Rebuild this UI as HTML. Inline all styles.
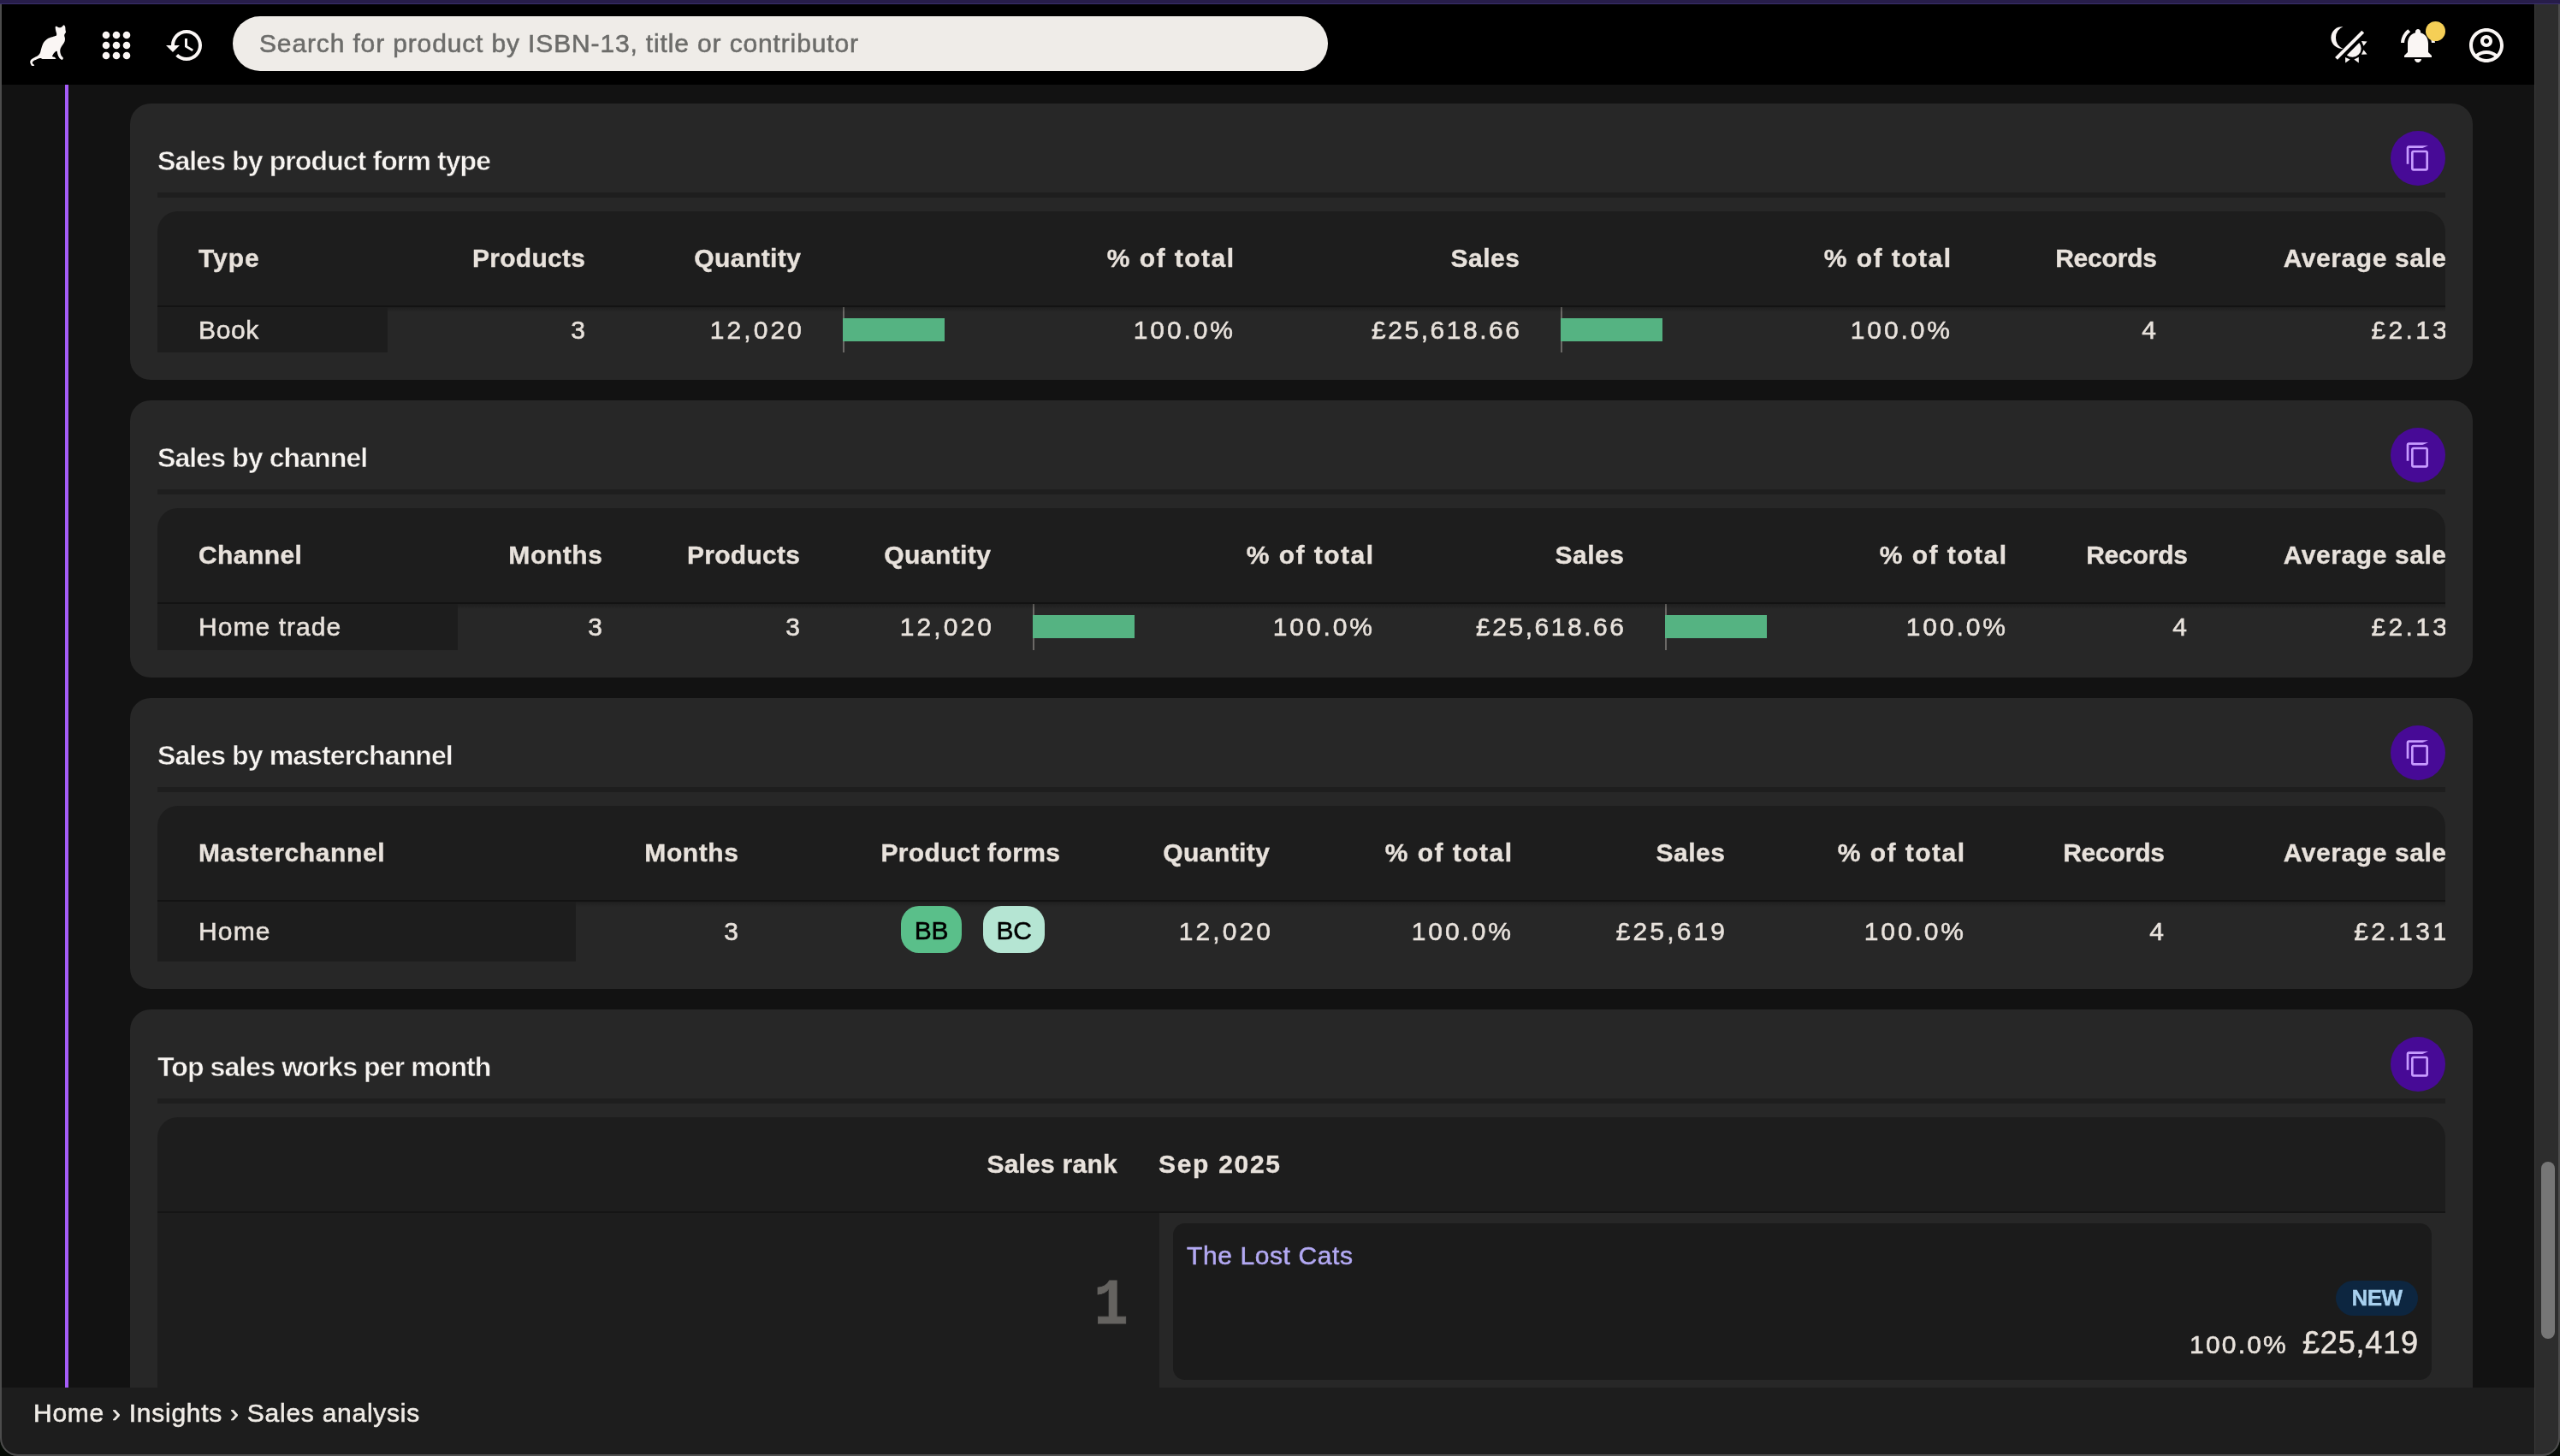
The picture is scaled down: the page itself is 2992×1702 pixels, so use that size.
<!DOCTYPE html>
<html lang="en">
<head>
<meta charset="utf-8">
<title>Sales analysis</title>
<style>
*{box-sizing:border-box;margin:0;padding:0}
html,body{width:2992px;height:1702px;overflow:hidden;background:#121212}
body{position:relative;will-change:transform;font-family:"Liberation Sans",sans-serif;font-size:30px;color:#e8e2dc;-webkit-font-smoothing:antialiased}
.abs{position:absolute}
#strip{left:0;top:0;width:2992px;height:5px;background:#271d4a;border-bottom:1px solid #3a2f6b}
#topbar{left:0;top:5px;width:2962px;height:94px;background:#000}
#sbtrack{left:2962px;top:5px;width:30px;height:1697px;background:#2d2d2d;border-left:1px solid #393939}
#sbthumb{left:2970px;top:1358px;width:16px;height:207px;border-radius:8px;background:#767676}
#frame{left:0;top:5px;width:2992px;height:1697px;border:2px solid #4c4c4c;border-top:0;border-radius:0 0 21px 21px;box-shadow:0 0 0 40px #050a05}
#vline{left:76px;top:99px;width:4px;height:1523px;background:#a55cf7}
#search{left:272px;top:19px;width:1280px;height:64px;border-radius:32px;background:#efece8;color:#6c6c6a;font-size:30px;line-height:64px;padding-left:31px;letter-spacing:.86px;white-space:nowrap}
.ico{position:absolute;fill:#faf6f4}
.card{position:absolute;left:152px;width:2738px;background:#272727;border-radius:24px}
.card h2{position:absolute;left:32px;top:35px;-webkit-text-stroke:.5px #272727;height:64px;line-height:64px;font-size:32px;font-weight:700;letter-spacing:-.9px;color:#f7f4f1;white-space:nowrap}
.card .hr{position:absolute;left:32px;top:104px;width:2674px;height:6px;background:#1e1e1e}
.copy{position:absolute;left:2642px;top:32px;width:64px;height:64px;border-radius:32px;background:#470a96}
.copy svg{position:absolute;left:16px;top:16px;width:32px;height:32px;fill:#c79bff}
table{position:absolute;left:32px;top:126px;width:2674px;border-collapse:separate;border-spacing:0;table-layout:fixed;border-radius:24px 24px 0 0;overflow:hidden}
th{height:112px;background:#1d1d1d;font-weight:700;font-size:30px;text-align:right;padding:0 30px 0 0;vertical-align:middle;border-bottom:2px solid #131313;white-space:nowrap;color:#e8e2dc}
td{height:53px;font-size:30px;text-align:right;padding:0 30px 0 0;vertical-align:middle;white-space:nowrap;letter-spacing:2.2px;color:#e8e2dc}
th{position:relative}
th:after{content:"";position:absolute;left:0;right:0;bottom:-8px;height:6px;background:linear-gradient(rgba(0,0,0,.22),rgba(0,0,0,0));z-index:2}
th:first-child:after{display:none}
th:first-child,td:first-child{text-align:left;padding-left:48px;letter-spacing:.5px}
td:first-child{background:#1d1d1d}
th:last-child,td:last-child{padding-right:0}
td:last-child{padding-right:0}
td.n{letter-spacing:2.2px;padding-right:28px}
td.n:last-child{padding-right:0;position:relative;left:2px}
.pc{position:relative}
.pc i{position:absolute;left:19px;top:0;width:2px;height:53px;background:#6b6966}
.pc b{position:absolute;left:19px;top:13px;width:119px;height:27px;background:#55b382}
.badge{display:inline-block;position:relative;top:-3px;left:-1px;width:71px;height:55px;line-height:57px;border-radius:21px;text-align:center;color:#000;font-size:30px;letter-spacing:-.3px;vertical-align:middle}
#footer{left:0;top:1622px;width:2962px;height:80px;background:#1d1d1d;font-size:30px;line-height:36px;padding:12px 0 0 39px;letter-spacing:.73px;color:#efebe6;white-space:nowrap}

table.tall td{height:70px}
table.t54 td{height:54px}
table.t54 .pc i{height:54px}
table.t54 .pc b{top:13px}
td.bd{letter-spacing:0;padding-right:46px;font-size:0}
.rank{position:absolute;left:32px;top:126px;width:2674px;height:400px;background:#1d1d1d;border-radius:24px 24px 0 0;overflow:hidden}
.rhead{position:absolute;left:0;top:0;width:2674px;height:112px;border-bottom:2px solid #151515;font-weight:700;line-height:110px;white-space:nowrap}
.rk{position:absolute;right:1552px;letter-spacing:.25px}
.mo{position:absolute;left:1170px;letter-spacing:1.7px}
.rleft{position:absolute;left:0;top:112px;width:1171px;height:300px}
.one{position:absolute;right:36px;top:70.5px;transform:scaleX(.88);transform-origin:100% 50%;font-family:"Liberation Mono",monospace;font-weight:700;font-size:76px;line-height:76px;color:#656360;-webkit-text-stroke:.8px #656360}
.work{position:absolute;left:1171px;top:112px;width:1503px;height:300px;background:#272727}
.work:before{content:"";position:absolute;left:16px;top:12px;width:1471px;height:183px;border-radius:14px;background:#1b1b1b}
.wtitle{position:absolute;left:32px;top:31.5px;color:#b3a9f3;letter-spacing:.6px;line-height:36px;white-space:nowrap}
.new{position:absolute;left:1375px;top:79px;width:96px;height:41px;border-radius:21px;background:#0d2640;color:#a8d0ee;font-weight:700;font-size:26px;line-height:41px;text-align:center;letter-spacing:-.5px}
.wpct{position:absolute;right:184px;top:136px;letter-spacing:2.2px;line-height:36px;white-space:nowrap}
.wval{position:absolute;right:31px;top:130px;font-size:36px;letter-spacing:.85px;line-height:44px;white-space:nowrap}
td,#footer,#search,.wtitle,.wpct,.wval,.badge{-webkit-text-stroke:.55px}
th,.rhead,.new{-webkit-text-stroke:.35px}
</style>
</head>
<body>
<div class="abs" id="topbar"></div>
<div class="abs" id="vline"></div>

<!-- top bar icons -->
<svg class="ico" style="left:26px;top:20px" width="64" height="64" viewBox="0 0 64 64"><path d="M48.8 9.2C49.2 9.4 49.8 10.1 50.1 11.0C50.4 11.9 50.4 13.8 50.5 14.9C50.6 16.0 51.1 16.8 51.0 17.6C50.9 18.4 50.0 19.2 49.7 19.8C49.4 20.4 49.2 20.7 49.2 21.5C49.2 22.3 49.8 23.5 49.9 24.6C50.0 25.7 50.0 26.9 49.7 28.1C49.4 29.3 48.6 30.5 47.9 31.6C47.2 32.7 46.3 33.7 45.7 34.7C45.1 35.7 44.6 36.7 44.4 37.8C44.2 38.9 44.2 40.1 44.4 41.3C44.6 42.5 45.0 43.8 45.5 44.8C46.0 45.8 47.3 46.8 47.7 47.5C48.1 48.2 47.9 48.4 47.7 48.8C47.5 49.2 47.0 49.9 46.4 49.9C45.8 49.9 45.1 49.5 44.4 48.8C43.7 48.1 42.8 46.8 42.2 45.7C41.7 44.6 41.4 43.1 41.1 42.2C40.9 41.3 41.0 40.6 40.7 40.2C40.4 39.8 39.8 39.7 39.3 40.0C38.8 40.3 38.0 41.1 37.4 41.8C36.8 42.5 36.0 43.7 35.6 44.4C35.2 45.1 34.8 45.5 35.2 45.9C35.6 46.3 37.2 46.5 37.8 46.8C38.4 47.1 38.6 47.5 38.7 47.9C38.8 48.3 40.7 48.8 38.2 49.0C35.7 49.2 26.3 49.1 23.7 49.0C21.1 48.9 22.9 48.2 22.4 48.1C21.9 48.0 21.6 47.9 20.7 48.1C19.8 48.3 17.9 49.0 16.7 49.5C15.4 50.0 14.0 50.7 13.2 51.2C12.4 51.7 12.1 52.2 11.9 52.7C11.8 53.2 11.9 54.0 12.3 54.5C12.7 55.0 13.9 55.6 14.1 56.0C14.3 56.4 14.0 56.8 13.6 56.9C13.2 57.0 12.0 57.2 11.4 56.9C10.8 56.6 10.3 55.7 9.9 54.9C9.5 54.1 9.1 53.2 9.2 52.3C9.3 51.4 9.6 50.5 10.3 49.7C11.0 48.9 12.0 48.4 13.2 47.7C14.4 47.0 16.5 46.2 17.6 45.5C18.7 44.8 19.2 44.2 19.8 43.5C20.4 42.8 20.7 42.2 21.1 41.3C21.5 40.3 21.6 39.1 22.0 37.8C22.4 36.5 22.7 34.9 23.3 33.4C23.9 31.9 24.6 30.2 25.5 29.0C26.4 27.8 27.4 26.7 28.6 25.9C29.8 25.1 31.0 24.6 32.5 24.0C34.0 23.4 36.2 23.0 37.4 22.6C38.6 22.2 39.1 22.3 39.6 21.8C40.1 21.3 40.2 20.7 40.2 19.8C40.2 18.9 39.5 17.5 39.3 16.3C39.0 15.1 38.8 13.6 38.7 12.7C38.6 11.8 38.7 11.3 38.9 11.0C39.1 10.7 39.5 10.6 40.0 10.8C40.5 11.0 41.5 11.8 42.2 12.1C42.9 12.3 43.7 12.4 44.4 12.3C45.1 12.2 45.6 11.8 46.2 11.4C46.8 11.0 47.5 10.1 47.9 9.7C48.3 9.3 48.4 9.0 48.8 9.2Z"/></svg>
<svg class="ico" style="left:112px;top:29px" width="48" height="48" viewBox="0 0 48 48"><g><circle cx="12" cy="12" r="4.3"/><circle cx="24" cy="12" r="4.3"/><circle cx="36" cy="12" r="4.3"/><circle cx="12" cy="24" r="4.3"/><circle cx="24" cy="24" r="4.3"/><circle cx="36" cy="24" r="4.3"/><circle cx="12" cy="36" r="4.3"/><circle cx="24" cy="36" r="4.3"/><circle cx="36" cy="36" r="4.3"/></g></svg>
<svg class="ico" style="left:192px;top:29px" width="48" height="48" viewBox="0 0 24 24"><path d="M13 3c-4.97 0-9 4.03-9 9H1l3.89 3.89.07.14L9 12H6c0-3.87 3.13-7 7-7s7 3.13 7 7-3.13 7-7 7c-1.93 0-3.68-.79-4.94-2.06l-1.42 1.42C8.27 19.99 10.51 21 13 21c4.97 0 9-4.03 9-9s-4.03-9-9-9zm-1 5v5l4.28 2.54.72-1.21-3.5-2.08V8H12z"/></svg>
<div class="abs" id="search">Search for product by ISBN-13, title or contributor</div>
<svg class="ico" style="left:2712px;top:20px" width="64" height="64" viewBox="0 0 64 64"><path d="M26.4 11.2A12.9 12.9 0 1 0 26.4 36.9A14 14 0 0 1 26.4 11.2Z"/><path d="M18.5 48.4L49.7 17.2" stroke="#faf6f4" stroke-width="4" fill="none"/><path d="M30.8 44.4A10.3 10.3 0 0 0 45.3 29.9Z"/><path d="M47.9 28.1L54.5 28.4L50.5 33.8ZM50.5 38.2L54.5 43.5L47.9 43.7ZM44.8 46.8L44.8 53.4L39.3 49.5ZM29 47L34.7 49.5L29.2 53.6Z"/></svg>
<svg class="ico" style="left:2802px;top:29px" width="48" height="48" viewBox="0 0 24 24"><path d="M7.58 4.08L6.15 2.65C3.75 4.48 2.17 7.3 2.03 10.5h2c.15-2.65 1.51-4.97 3.55-6.42zm12.39 6.42h2c-.15-3.2-1.73-6.02-4.12-7.85l-1.42 1.43c2.02 1.45 3.39 3.77 3.54 6.42zM18 11c0-3.07-1.64-5.64-4.5-6.32V4c0-.83-.67-1.5-1.5-1.5s-1.5.67-1.5 1.5v.68C7.63 5.36 6 7.92 6 11v5l-2 2v1h16v-1l-2-2v-5zm-6 11c.14 0 .27-.01.4-.04.65-.14 1.18-.58 1.44-1.18.1-.24.15-.5.15-.78h-4c.01 1.1.9 2 2.01 2z"/></svg>
<div class="abs" style="left:2835px;top:25px;width:23px;height:23px;border-radius:50%;background:#f5cf56"></div>
<svg class="ico" style="left:2882px;top:29px" width="48" height="48" viewBox="0 0 24 24"><path d="M12 2C6.48 2 2 6.48 2 12s4.48 10 10 10 10-4.48 10-10S17.52 2 12 2zM7.35 18.5C8.66 17.56 10.26 17 12 17s3.34.56 4.65 1.5c-1.31.94-2.91 1.5-4.65 1.5s-3.34-.56-4.65-1.5zm10.79-1.38C16.45 15.8 14.32 15 12 15s-4.45.8-6.14 2.12C4.7 15.73 4 13.950 4 12c0-4.42 3.58-8 8-8s8 3.58 8 8c0 1.950-.7 3.73-1.86 5.12zM12 6c-1.93 0-3.5 1.57-3.5 3.5S10.070 13 12 13s3.5-1.57 3.5-3.5S13.930 6 12 6zm0 5c-.83 0-1.500-.67-1.500-1.500S11.170 8 12 8s1.500.67 1.500 1.500S12.830 11 12 11z"/></svg>

<section class="card" style="top:121px;height:323px">
<h2>Sales by product form type</h2>
<div class="copy"><svg viewBox="0 0 24 24"><path d="M21 1H4c-1.1 0-2 .9-2 2v14h2V3h12zm-2 4H8c-1.1 0-2 .9-2 2v14c0 1.1.9 2 2 2h11c1.1 0 2-.9 2-2V7c0-1.1-.9-2-2-2zm0 16H8V7h11v14z"/></svg></div>
<div class="hr"></div>
<table class="">
<colgroup><col style="width:269px"><col style="width:260px"><col style="width:253px"><col style="width:504px"><col style="width:335px"><col style="width:503px"><col style="width:242px"><col style="width:308px"></colgroup>
<thead><tr><th><span id="c0h0" style="letter-spacing:0.97px;margin-right:-0.97px;position:relative;left:0.00px">Type</span></th><th><span id="c0h1" style="letter-spacing:0.30px;margin-right:-1.30px;position:relative;left:0.00px">Products</span></th><th><span id="c0h2" style="letter-spacing:0.44px;margin-right:-0.44px;position:relative;left:0.00px">Quantity</span></th><th><span id="c0h3" style="letter-spacing:1.46px;margin-right:-3.46px;position:relative;left:0.00px">% of total</span></th><th><span id="c0h4" style="letter-spacing:0.55px;margin-right:-1.55px;position:relative;left:0.00px">Sales</span></th><th><span id="c0h5" style="letter-spacing:1.46px;margin-right:-3.46px;position:relative;left:0.00px">% of total</span></th><th><span id="c0h6" style="letter-spacing:-0.20px;margin-right:-0.80px;position:relative;left:0.00px">Records</span></th><th><span id="c0h7" style="letter-spacing:0.57px;margin-right:-1.57px;position:relative;left:0.00px">Average sale</span></th></tr></thead>
<tbody><tr><td><span id="c0d0" style="letter-spacing:0.66px;margin-right:-0.66px;position:relative;left:0.00px">Book</span></td><td class="n"><span id="c0d1" style="letter-spacing:2.60px;margin-right:-1.60px;position:relative;left:0.00px">3</span></td><td class="n"><span id="c0d2" style="letter-spacing:3.10px;margin-right:-2.10px;position:relative;left:0.00px">12,020</span></td><td class="n pc"><i></i><b></b><span id="c0d3" style="letter-spacing:2.90px;margin-right:-1.90px;position:relative;left:0.00px">100.0%</span></td><td class="n"><span id="c0d4" style="letter-spacing:2.54px;margin-right:-1.54px;position:relative;left:0.00px">£25,618.66</span></td><td class="n pc"><i></i><b></b><span id="c0d5" style="letter-spacing:2.90px;margin-right:-1.90px;position:relative;left:0.00px">100.0%</span></td><td class="n"><span id="c0d6" style="letter-spacing:2.60px;margin-right:-0.60px;position:relative;left:0.00px">4</span></td><td class="n"><span id="c0d7" style="letter-spacing:3.35px;margin-right:-3.35px;position:relative;left:0.00px">£2.13</span></td></tr></tbody>
</table>
</section>

<section class="card" style="top:468px;height:324px">
<h2>Sales by channel</h2>
<div class="copy"><svg viewBox="0 0 24 24"><path d="M21 1H4c-1.1 0-2 .9-2 2v14h2V3h12zm-2 4H8c-1.1 0-2 .9-2 2v14c0 1.1.9 2 2 2h11c1.1 0 2-.9 2-2V7c0-1.1-.9-2-2-2zm0 16H8V7h11v14z"/></svg></div>
<div class="hr"></div>
<table class="t54">
<colgroup><col style="width:351px"><col style="width:198px"><col style="width:231px"><col style="width:224px"><col style="width:445px"><col style="width:294px"><col style="width:446px"><col style="width:213px"><col style="width:272px"></colgroup>
<thead><tr><th><span id="c1h0" style="letter-spacing:0.41px;margin-right:-0.41px;position:relative;left:0.00px">Channel</span></th><th><span id="c1h1" style="letter-spacing:0.60px;margin-right:-1.60px;position:relative;left:0.00px">Months</span></th><th><span id="c1h2" style="letter-spacing:0.30px;margin-right:-1.30px;position:relative;left:0.00px">Products</span></th><th><span id="c1h3" style="letter-spacing:0.44px;margin-right:-0.44px;position:relative;left:0.00px">Quantity</span></th><th><span id="c1h4" style="letter-spacing:1.46px;margin-right:-3.46px;position:relative;left:0.00px">% of total</span></th><th><span id="c1h5" style="letter-spacing:0.55px;margin-right:-1.55px;position:relative;left:0.00px">Sales</span></th><th><span id="c1h6" style="letter-spacing:1.46px;margin-right:-3.46px;position:relative;left:0.00px">% of total</span></th><th><span id="c1h7" style="letter-spacing:-0.20px;margin-right:-0.80px;position:relative;left:0.00px">Records</span></th><th><span id="c1h8" style="letter-spacing:0.57px;margin-right:-1.57px;position:relative;left:0.00px">Average sale</span></th></tr></thead>
<tbody><tr><td><span id="c1d0" style="letter-spacing:1.06px;margin-right:-1.06px;position:relative;left:0.00px">Home trade</span></td><td class="n"><span id="c1d1" style="letter-spacing:2.60px;margin-right:-1.60px;position:relative;left:0.00px">3</span></td><td class="n"><span id="c1d2" style="letter-spacing:2.60px;margin-right:-1.60px;position:relative;left:0.00px">3</span></td><td class="n"><span id="c1d3" style="letter-spacing:3.10px;margin-right:-2.10px;position:relative;left:0.00px">12,020</span></td><td class="n pc"><i></i><b></b><span id="c1d4" style="letter-spacing:2.90px;margin-right:-1.90px;position:relative;left:0.00px">100.0%</span></td><td class="n"><span id="c1d5" style="letter-spacing:2.54px;margin-right:-1.54px;position:relative;left:0.00px">£25,618.66</span></td><td class="n pc"><i></i><b></b><span id="c1d6" style="letter-spacing:2.90px;margin-right:-1.90px;position:relative;left:0.00px">100.0%</span></td><td class="n"><span id="c1d7" style="letter-spacing:2.60px;margin-right:-0.60px;position:relative;left:0.00px">4</span></td><td class="n"><span id="c1d8" style="letter-spacing:3.35px;margin-right:-3.35px;position:relative;left:0.00px">£2.13</span></td></tr></tbody>
</table>
</section>

<section class="card" style="top:816px;height:340px">
<h2>Sales by masterchannel</h2>
<div class="copy"><svg viewBox="0 0 24 24"><path d="M21 1H4c-1.1 0-2 .9-2 2v14h2V3h12zm-2 4H8c-1.1 0-2 .9-2 2v14c0 1.1.9 2 2 2h11c1.1 0 2-.9 2-2V7c0-1.1-.9-2-2-2zm0 16H8V7h11v14z"/></svg></div>
<div class="hr"></div>
<table class="tall">
<colgroup><col style="width:489px"><col style="width:219px"><col style="width:376px"><col style="width:246px"><col style="width:281px"><col style="width:250px"><col style="width:279px"><col style="width:235px"><col style="width:299px"></colgroup>
<thead><tr><th><span id="c2h0" style="letter-spacing:0.63px;margin-right:-0.63px;position:relative;left:0.00px">Masterchannel</span></th><th><span id="c2h1" style="letter-spacing:0.60px;margin-right:-1.60px;position:relative;left:0.00px">Months</span></th><th><span id="c2h2" style="letter-spacing:0.38px;margin-right:-1.38px;position:relative;left:0.00px">Product forms</span></th><th><span id="c2h3" style="letter-spacing:0.44px;margin-right:-0.44px;position:relative;left:0.00px">Quantity</span></th><th><span id="c2h4" style="letter-spacing:1.46px;margin-right:-3.46px;position:relative;left:0.00px">% of total</span></th><th><span id="c2h5" style="letter-spacing:0.55px;margin-right:-1.55px;position:relative;left:0.00px">Sales</span></th><th><span id="c2h6" style="letter-spacing:1.46px;margin-right:-3.46px;position:relative;left:0.00px">% of total</span></th><th><span id="c2h7" style="letter-spacing:-0.20px;margin-right:-0.80px;position:relative;left:0.00px">Records</span></th><th><span id="c2h8" style="letter-spacing:0.57px;margin-right:-1.57px;position:relative;left:0.00px">Average sale</span></th></tr></thead>
<tbody><tr><td><span id="c2d0" style="letter-spacing:1.17px;margin-right:-1.17px;position:relative;left:0.00px">Home</span></td><td class="n"><span id="c2d1" style="letter-spacing:2.60px;margin-right:-1.60px;position:relative;left:0.00px">3</span></td><td class="bd"><span class="badge" style="background:#5abf8a">BB</span><span class="badge" style="background:#b5e5d3;margin-left:25px;width:72px">BC</span></td><td class="n"><span id="c2d3" style="letter-spacing:3.10px;margin-right:-2.10px;position:relative;left:0.00px">12,020</span></td><td class="n"><span id="c2d4" style="letter-spacing:2.90px;margin-right:-1.90px;position:relative;left:0.00px">100.0%</span></td><td class="n"><span id="c2d5" style="letter-spacing:3.15px;margin-right:-2.15px;position:relative;left:0.00px">£25,619</span></td><td class="n"><span id="c2d6" style="letter-spacing:2.90px;margin-right:-1.90px;position:relative;left:0.00px">100.0%</span></td><td class="n"><span id="c2d7" style="letter-spacing:2.60px;margin-right:-0.60px;position:relative;left:0.00px">4</span></td><td class="n"><span id="c2d8" style="letter-spacing:3.40px;margin-right:-3.40px;position:relative;left:0.00px">£2.131</span></td></tr></tbody>
</table>
</section>
<!-- Card 4 -->
<section class="card" style="top:1180px;height:522px;border-radius:24px 24px 0 0">
<h2>Top sales works per month</h2>
<div class="copy"><svg viewBox="0 0 24 24"><path d="M21 1H4c-1.1 0-2 .9-2 2v14h2V3h12zm-2 4H8c-1.1 0-2 .9-2 2v14c0 1.1.9 2 2 2h11c1.1 0 2-.9 2-2V7c0-1.1-.9-2-2-2zm0 16H8V7h11v14z"/></svg></div>
<div class="hr"></div>
<div class="rank">
 <div class="rhead"><span class="rk">Sales rank</span><span class="mo">Sep 2025</span></div>
 <div class="rleft"><span class="one">1</span></div>
 <div class="work">
  <a class="wtitle">The Lost Cats</a>
  <span class="new">NEW</span>
  <span class="wpct">100.0%</span><span class="wval">£25,419</span>
 </div>
</div>
</section>


<div class="abs" id="footer">Home › Insights › Sales analysis</div>
<div class="abs" id="sbtrack"></div>
<div class="abs" id="sbthumb"></div>
<div class="abs" id="frame"></div>
<div class="abs" id="strip"></div>
</body>
</html>
